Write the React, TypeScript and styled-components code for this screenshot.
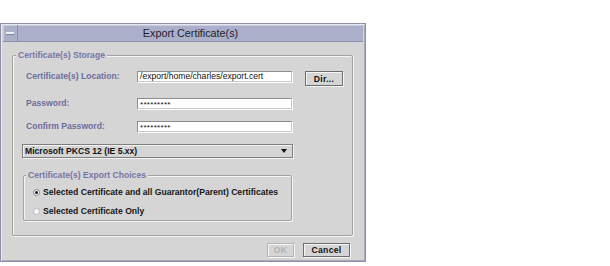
import styled, { createGlobalStyle } from "styled-components"

const GlobalStyle = createGlobalStyle`
  html, body {
    margin: 0;
    background: #ffffff;
  }
  body {
    font-family: "Liberation Sans", Arial, sans-serif;
  }
`

const Window = styled.div`
  margin-top: 23px;
  width: 366px;
  height: 239px;
  box-sizing: border-box;
  background: #d5d5d5;
  border: 1px solid #8e8ea8;
  box-shadow: inset 1px 1px 0 #e6e6ee, inset -1px -1px 0 #a9a9bd;
  padding: 1px 2px 2px 2px;
  display: flex;
  flex-direction: column;
`

const TitleBar = styled.div`
  height: 16px;
  display: flex;
  align-items: stretch;
  background: #abafc9;
  border-bottom: 1px solid #8c8fa9;
  box-shadow: inset 0 1px 0 #c8cbdc;
`

const CloseBox = styled.div`
  width: 14px;
  display: flex;
  align-items: center;
  justify-content: center;
  border-right: 1px solid #8c8fa9;
  box-shadow: inset 1px 1px 0 #c8cbdc;

  &::before {
    content: "";
    width: 8px;
    height: 2px;
    background: #eef0f6;
    border-bottom: 1px solid #7d809a;
  }
`

const Title = styled.div`
  flex: 1;
  text-align: center;
  font-size: 10.8px;
  line-height: 16px;
  color: #1e1e28;
`

const Body = styled.div`
  flex: 1;
  display: flex;
  flex-direction: column;
  padding: 8px 10px 0 9px;
`

const Group = styled.fieldset<{ $inner?: boolean }>`
  margin: 0;
  min-width: 0;
  padding: ${(p) => (p.$inner ? "0 8px 3px 9px" : "0 10px 14px 9px")};
  border: 1px solid #a3a3a3;
  box-shadow: inset 1px 1px 0 #f4f4f4, 1px 1px 0 #f4f4f4;
  border-radius: 2px;
`

const Legend = styled.legend<{ $inner?: boolean }>`
  margin-left: ${(p) => (p.$inner ? "-7px" : "-6px")};
  padding: 0 2px;
  background: #d5d5d5;
  font-size: 8.6px;
  line-height: 10px;
  font-weight: bold;
  color: #7676a6;
`

const FormGrid = styled.div`
  margin-top: 11px;
  padding-left: 4px;
  display: grid;
  grid-template-columns: 111px 155px 51px;
  row-gap: 12px;
  align-items: start;
`

const Label = styled.label`
  font-size: 8.6px;
  line-height: 11px;
  font-weight: bold;
  color: #6d6d9d;
  white-space: nowrap;
`

const TextField = styled.div`
  height: 11px;
  box-sizing: border-box;
  background: #ffffff;
  border: 1px solid #8d8d8d;
  border-right-color: #c8c8c8;
  border-bottom-color: #c8c8c8;
  box-shadow: 1px 1px 0 #ffffff;
  padding-left: 2px;
  font-size: 8.6px;
  line-height: 9px;
  color: #111;
  white-space: nowrap;
  overflow: hidden;
`

const Masked = styled.span`
  font-size: 8px;
  letter-spacing: 0.3px;
  position: relative;
  top: 1px;
`

const Button = styled.button<{ $disabled?: boolean; $w: number; $h?: number }>`
  justify-self: end;
  width: ${(p) => p.$w}px;
  height: ${(p) => p.$h ?? 15}px;
  box-sizing: border-box;
  padding: 0;
  background: #d5d5d5;
  border: 1px solid ${(p) => (p.$disabled ? "#b4b4b4" : "#6e6e6e")};
  box-shadow: inset 1px 1px 0 #f6f6f6, 1px 1px 0 #f6f6f6;
  font-family: "Liberation Sans", Arial, sans-serif;
  font-size: 8.6px;
  font-weight: bold;
  letter-spacing: 0.3px;
  color: ${(p) => (p.$disabled ? "#b2b2b2" : "#111")};
`

const Select = styled.div`
  margin-top: 12px;
  width: 271px;
  height: 14px;
  box-sizing: border-box;
  display: flex;
  align-items: center;
  justify-content: space-between;
  padding: 0 5px 0 2px;
  border: 1px solid #7f7f7f;
  box-shadow: inset 1px 1px 0 #f2f2f2, 1px 1px 0 #f2f2f2;
  font-size: 8.6px;
  font-weight: bold;
  color: #111;
`

const Arrow = styled.span`
  width: 0;
  height: 0;
  border-left: 3px solid transparent;
  border-right: 3px solid transparent;
  border-top: 4px solid #111;
`

const ChoicesWrap = styled.div`
  margin-top: 12px;
  margin-left: 1px;
  width: 269px;
`

const RadioList = styled.div`
  margin-top: 6px;
  display: flex;
  flex-direction: column;
  gap: 7px;
`

const RadioRow = styled.div`
  display: flex;
  align-items: center;
  gap: 3px;
  height: 12px;
  font-size: 8.6px;
  font-weight: bold;
  color: #161616;
`

const RadioDot = styled.span<{ $checked?: boolean }>`
  width: 7px;
  height: 7px;
  box-sizing: border-box;
  border-radius: 50%;
  background: #fafafa;
  border: 1px solid ${(p) => (p.$checked ? "#8a8a8a" : "#b9b9b9")};
  display: flex;
  align-items: center;
  justify-content: center;

  &::after {
    content: "";
    width: 3px;
    height: 3px;
    border-radius: 50%;
    background: ${(p) => (p.$checked ? "#111" : "transparent")};
  }
`

const Footer = styled.div`
  display: flex;
  justify-content: flex-end;
  gap: 9px;
  padding: 7px 3px 0 0;
`

export default function App() {
  return (
    <>
      <GlobalStyle />
      <Window>
        <TitleBar>
          <CloseBox />
          <Title>Export Certificate(s)</Title>
        </TitleBar>
        <Body>
          <Group>
            <Legend>Certificate(s) Storage</Legend>
            <FormGrid>
              <Label>Certificate(s) Location:</Label>
              <TextField>/export/home/charles/export.cert</TextField>
              <Button $w={38}>Dir...</Button>
              <Label>Password:</Label>
              <TextField>
                <Masked>*********</Masked>
              </TextField>
              <span />
              <Label>Confirm Password:</Label>
              <TextField>
                <Masked>*********</Masked>
              </TextField>
              <span />
            </FormGrid>
            <Select>
              <span>Microsoft PKCS 12 (IE 5.xx)</span>
              <Arrow />
            </Select>
            <ChoicesWrap>
              <Group $inner>
                <Legend $inner>Certificate(s) Export Choices</Legend>
                <RadioList>
                  <RadioRow>
                    <RadioDot $checked />
                    Selected Certificate and all Guarantor(Parent) Certificates
                  </RadioRow>
                  <RadioRow>
                    <RadioDot />
                    Selected Certificate Only
                  </RadioRow>
                </RadioList>
              </Group>
            </ChoicesWrap>
          </Group>
          <Footer>
            <Button $disabled $w={27} $h={14}>
              OK
            </Button>
            <Button $w={47} $h={14}>
              Cancel
            </Button>
          </Footer>
        </Body>
      </Window>
    </>
  )
}
